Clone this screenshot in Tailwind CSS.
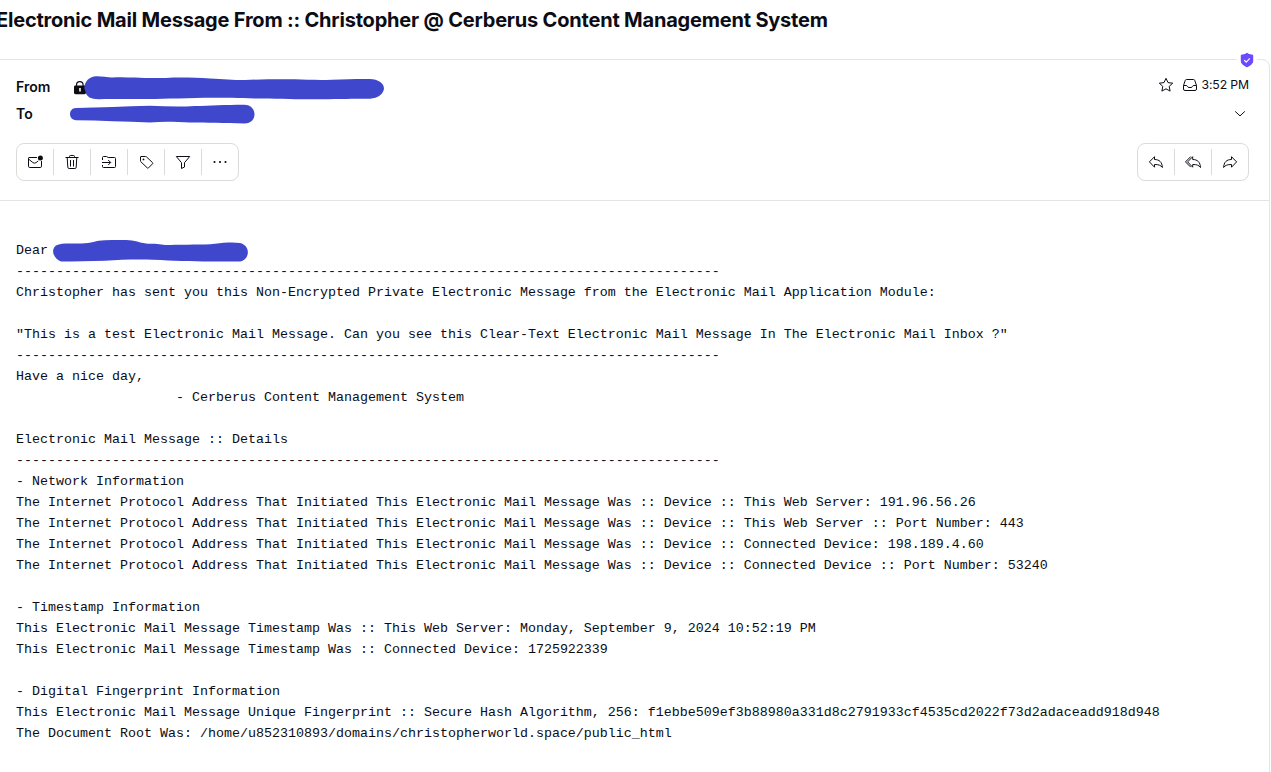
<!DOCTYPE html>
<html lang="en">
<head>
<meta charset="utf-8">
<title>Electronic Mail Message</title>
<script src="https://cdn.jsdelivr.net/npm/@tailwindcss/browser@4"></script>
</head>
<body class="w-[1271px] h-[772px] overflow-hidden bg-white text-[#0c0c14] font-['Inter',sans-serif]">
<div class="flex h-[772px] flex-col overflow-hidden">
  <h1 class="-ml-[4px] h-[59px] shrink-0 pt-[6px] text-[20px] leading-7 font-bold whitespace-nowrap"><span id="subject" class="inline-block tracking-[-0.2px]">Electronic Mail Message From :: Christopher @ Cerberus Content Management System</span></h1>
  <main class="relative -ml-[7px] mr-px h-[760px] shrink-0 rounded-lg border border-[#e6e5e4]">
    <div class="absolute -top-[9px] right-[12px] bg-white px-[2px]">
      <svg class="block" width="16" height="18" viewBox="0 0 16 18"><path d="M8 2.500 10 3.800 13.500 4.500V10C13.500 13 11 14.200 8 15.500 5 14.200 2.500 13 2.500 10V4.500L6 3.800Z" fill="#6d4aff" stroke="#6d4aff" stroke-width="1.400" stroke-linejoin="round"/><path d="m5.200 9.100 2 2 3.600-3.700" fill="none" stroke="#fff" stroke-width="1.200"/></svg>
    </div>
    <header class="flex h-[141px] flex-col border-b border-[#e6e5e4] pl-[22px] pr-[20px] pt-[13px]">
      <div class="flex h-[27px] items-center">
        <span class="w-[54px] text-[14px] font-semibold">From</span>
        <div class="relative h-[27px] w-[320px]">
          <svg class="absolute left-0 top-0" width="320" height="27" viewBox="70 73 320 27"><path d="M76.500 87v-2a3.300 3.300 0 0 1 6.600 0V87" fill="none" stroke="#0c0c14" stroke-width="1.200"/><rect x="74" y="85.500" width="12" height="8.700" rx="1.400" fill="#0c0c14"/><path d="M79.200 88h1.600v3.500h-1.600z" fill="#fff"/><path d="M84.300 88C84.500 81 90 76.500 96 76.300 102 76.200 107 77.500 112 77.500 120 76.800 128 77.300 135 77.500 147 78.300 156 78.200 166 77.900 180 77.300 196 77.700 210 78.500 224 79.400 232 80 245 80 260 79.300 280 79 295 79.300 307 79.800 318 80.200 332 79.800 346 79.200 359 78.800 370 79 378 79.300 384 83 384 88.500 383.500 94 378 98.300 370 98.700 350 98.500 335 99.300 310 99.200 290 99.200 270 98.300 255 98.400 235 98 220 97.500 205 97.700 180 98.200 160 99 140 99.100 120 99.200 110 98.500 99 99.200 91 99.300 87.500 97 86 93.500Z" fill="#3f48cc"/></svg>
        </div>
        <div class="ml-auto flex h-[24px] items-center self-start text-[#0c0c14]">
          <svg class="mr-[8px]" width="16" height="16" viewBox="0 0 16 16" fill="none" stroke="currentColor" stroke-linejoin="round"><path d="m8 1.300 2 4.300 4.700.6-3.500 3.200.9 4.700L8 11.800l-4.100 2.300.9-4.700L1.300 6.200 6 5.600Z"/></svg>
          <svg class="mr-[3px]" width="16" height="16" viewBox="0 0 16 16" fill="none" stroke="currentColor"><path d="M1.500 8.500 3.300 3.200Q3.600 2.500 4.500 2.500h7q.9 0 1.200.7l1.800 5.300v3.500q0 1.500-1.500 1.500H3Q1.500 13.500 1.500 12Zm0 0h2.500q1 0 1.400.8.500 1.200 1.600 1.200h2q1.100 0 1.600-1.200.4-.8 1.400-.8h2.500" stroke-linejoin="round"/></svg>
          <span id="time" class="text-[12.25px] tracking-[-0.12px]">3:52 PM</span>
        </div>
      </div>
      <div class="flex h-[27px] items-center">
        <span class="w-[54px] text-[14px] font-semibold">To</span>
        <svg width="190" height="27" viewBox="70 100 190 27"><path d="M76 108C68 108 68 120 76 120.200 100 120.400 125 121.600 150 122.500 162 121.500 175 121.700 190 122.600 206 122.700 225 123.400 244 123.500 258 124 258 104.500 244 104.700 225 104.700 210 105.700 195 106 180 107 165 106.400 150 105.800 125 106.500 100 107.700 76 108Z" fill="#3f48cc"/></svg>
        <svg class="ml-auto mr-[1px]" width="16" height="16" viewBox="0 0 16 16" fill="none" stroke="#0c0c14"><path d="m3.200 5.400 4.800 4.500 4.800-4.500"/></svg>
      </div>
      <div class="mt-4 flex justify-between text-[#0c0c14]">
        <div class="flex h-[38px] w-[223px] items-center rounded-lg border border-[#dddbd9]">
          <div class="flex h-[26px] w-[37px] items-center justify-center border-r border-[#dddbd9]"><svg width="16" height="16" viewBox="0 0 16 16" fill="none" stroke="currentColor"><path d="M10 3.500H2Q1.500 3.500 1.500 4.200v8q0 1.300 1.300 1.300h10.400q1.300 0 1.300-1.300V7M1.500 5 5.900 8.600q1.600 1.200 3.200 0L11.300 6.900"/><circle cx="13.400" cy="4" r="2.500" fill="currentColor" stroke="none"/></svg></div>
          <div class="flex h-[26px] w-[37px] items-center justify-center border-r border-[#dddbd9]"><svg width="16" height="16" viewBox="0 0 16 16" fill="none" stroke="currentColor"><path d="M1.500 3.500h13M5.500 3.300V2.500q0-1 1-1h3q1 0 1 1v.8M3.200 3.500l.6 9.700q.1 1.300 1.300 1.300h5.800q1.200 0 1.300-1.300l.6-9.700M6.500 6v6.500M9.500 6v6.500"/></svg></div>
          <div class="flex h-[26px] w-[37px] items-center justify-center border-r border-[#dddbd9]"><svg width="16" height="16" viewBox="0 0 16 16" fill="none" stroke="currentColor"><path d="M1.500 6V3.500q0-1 1-1h3L7.200 3.500h6.300q1 0 1 1v8q0 1-1 1h-11q-1 0-1-1V11M1 8.500h8.500M7.200 6l2.500 2.500L7.200 11"/></svg></div>
          <div class="flex h-[26px] w-[37px] items-center justify-center border-r border-[#dddbd9]"><svg width="16" height="16" viewBox="0 0 16 16" fill="none" stroke="currentColor"><path d="M3 2.500h4.600q.5 0 .9.400l6 5.700q.6.600 0 1.200l-4 4.100q-.6.600-1.200 0L2.800 7.700q-.3-.3-.3-.8V3q0-.5.500-.5Z"/><circle cx="5.500" cy="5.400" r=".9" fill="currentColor" stroke="none"/></svg></div>
          <div class="flex h-[26px] w-[37px] items-center justify-center border-r border-[#dddbd9]"><svg width="16" height="16" viewBox="0 0 16 16" fill="none" stroke="currentColor" stroke-linejoin="round"><path d="M1.300 2.500h13.400L9.500 8.700v4.300l-3 1.500V8.700Z"/></svg></div>
          <div class="flex h-[26px] w-[36px] items-center justify-center"><svg width="16" height="16" viewBox="0 0 16 16" fill="currentColor"><circle cx="2.500" cy="8" r="1.050"/><circle cx="8" cy="8" r="1.050"/><circle cx="13.500" cy="8" r="1.050"/></svg></div>
        </div>
        <div class="flex h-[38px] w-[112px] items-center rounded-lg border border-[#dddbd9]">
          <div class="flex h-[26px] w-[37px] items-center justify-center border-r border-[#dddbd9]"><svg width="16" height="16" viewBox="0 0 16 16" fill="none" stroke="currentColor" stroke-linejoin="round"><path d="M6.500 2.700v2.800c4.800 0 7.600 2.600 7.900 8-1.700-2.300-3.800-3-7.900-3v2.700L1.400 7.900Z"/></svg></div>
          <div class="flex h-[26px] w-[37px] items-center justify-center border-r border-[#dddbd9]"><svg width="16" height="16" viewBox="0 0 16 16" fill="none" stroke="currentColor" stroke-linejoin="round"><path d="M7.700 2.700v2.800c4.800 0 7.500 2.600 7.800 8-1.700-2.300-3.700-3-7.800-3v2.700L2.600 7.900Z"/><path d="M5.700 2.600.5 7.900l5.200 5.200"/></svg></div>
          <div class="flex h-[26px] w-[36px] items-center justify-center"><svg width="16" height="16" viewBox="0 0 16 16" fill="none" stroke="currentColor" stroke-linejoin="round"><path d="M9.500 2.700v2.800c-4.800 0-7.600 2.600-7.900 8 1.700-2.300 3.800-3 7.900-3v2.700l5.100-5.300Z"/></svg></div>
        </div>
      </div>
    </header>
    <div class="relative pl-[22px] pt-[39px]">
      <svg class="absolute left-[58px] top-[37px]" width="200" height="26" viewBox="52 238 200 26"><path d="M61 261.500C54 259 50 250 56 245.500C61 242.800 70 243.800 80 243.500C92 243.700 95 240.500 105 240.300C115 239.900 125 239.700 132 240.500C140 242 144 243.900 152 243.700C160 243.900 163 245 170 245C185 244.500 203 245 215 243.800C225 242.300 234 242 240 243C251 245.500 250 260 240 261.500C220 261.700 190 261.500 168 260.500C145 259 125 259.500 105 260.700C90 261.200 75 261.500 61 261.500Z" fill="#3f48cc"/></svg>
<pre class="font-['Consolas','Liberation_Mono',monospace] text-[13.34px] leading-[21px]">Dear
----------------------------------------------------------------------------------------
Christopher has sent you this Non-Encrypted Private Electronic Message from the Electronic Mail Application Module:

"This is a test Electronic Mail Message. Can you see this Clear-Text Electronic Mail Message In The Electronic Mail Inbox ?"
----------------------------------------------------------------------------------------
Have a nice day,
                    - Cerberus Content Management System

Electronic Mail Message :: Details
----------------------------------------------------------------------------------------
- Network Information
The Internet Protocol Address That Initiated This Electronic Mail Message Was :: Device :: This Web Server: 191.96.56.26
The Internet Protocol Address That Initiated This Electronic Mail Message Was :: Device :: This Web Server :: Port Number: 443
The Internet Protocol Address That Initiated This Electronic Mail Message Was :: Device :: Connected Device: 198.189.4.60
The Internet Protocol Address That Initiated This Electronic Mail Message Was :: Device :: Connected Device :: Port Number: 53240

- Timestamp Information
This Electronic Mail Message Timestamp Was :: This Web Server: Monday, September 9, 2024 10:52:19 PM
This Electronic Mail Message Timestamp Was :: Connected Device: 1725922339

- Digital Fingerprint Information
This Electronic Mail Message Unique Fingerprint :: Secure Hash Algorithm, 256: f1ebbe509ef3b88980a331d8c2791933cf4535cd2022f73d2adaceadd918d948
The Document Root Was: /home/u852310893/domains/christopherworld.space/public_html</pre>
    </div>
  </main>
</div>
</body>
</html>
